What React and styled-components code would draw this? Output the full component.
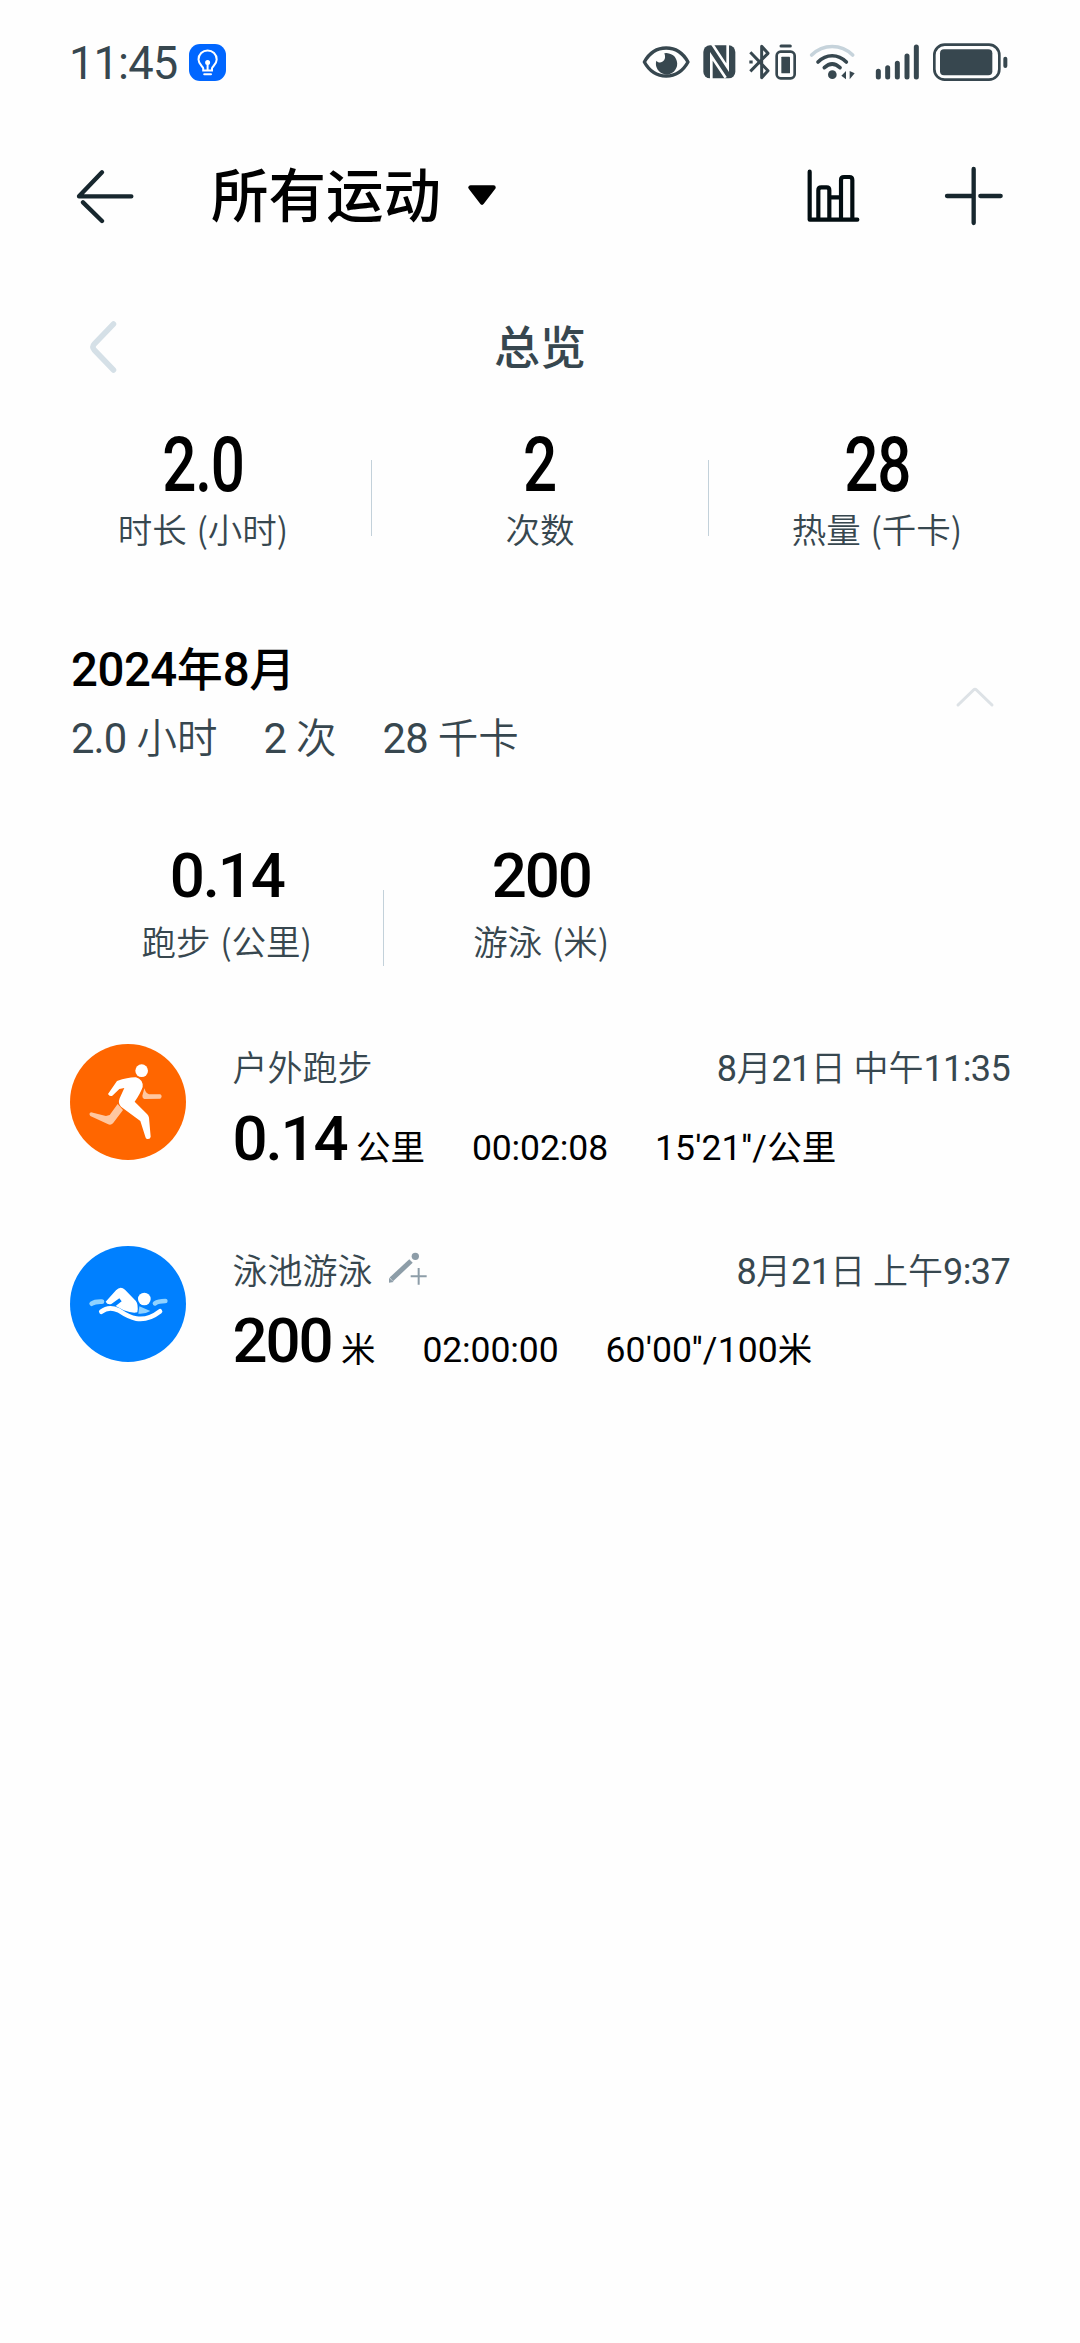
import React from 'react';
import styled, { createGlobalStyle } from 'styled-components';

const GlobalStyle = createGlobalStyle`
  body {
    margin: 0;
    background: #fefefe;
    font-family: "Noto Sans CJK SC", "Noto Sans", sans-serif;
    color: #000;
  }
  * { box-sizing: border-box; }
  svg { display: block; flex: none; }
`;

// Styled components
const Screen = styled.div`
  width: 1080px;
  min-height: 2343px;
  background: #fefefe;
  white-space: nowrap;
`;

const StatusBar = styled.div`
  height: 124px;
  padding: 0 70px 0 69px;
  display: flex;
  align-items: center;
  justify-content: space-between;
  color: #37474f;
`;

const StatusGroup = styled.div`
  display: flex;
  align-items: center;
  gap: ${({ gap }) => gap}px;
`;

const Clock = styled.div`
  font-size: 44px;
  line-height: 60px;
  padding-bottom: 4px;
`;

const Digits = styled.span`
  font-family: Roboto, "Noto Sans", sans-serif;
  font-size: 1.03em;
  font-weight: ${({ $weight }) => $weight};
  letter-spacing: ${({ $spacing }) => $spacing}em;
  line-height: 0;
`;

const Header = styled.header`
  height: 143px;
  padding: 0 76px 0 76px;
  display: flex;
  align-items: center;
`;

const Title = styled.h1`
  margin: 0 26px 0 75px;
  padding-bottom: 8px;
  font-size: 57.5px;
  line-height: 80px;
  font-weight: 500;
`;

const HeaderActions = styled.div`
  margin-left: auto;
  display: flex;
  align-items: center;
  gap: 84px;
`;

const Pager = styled.div`
  height: 140px;
  padding: 19px 88px 0;
  display: grid;
  grid-template-columns: 30px 1fr 30px;
  align-items: center;
`;

const PagerTitle = styled.div`
  text-align: center;
  font-size: 46px;
  line-height: 60px;
  padding-bottom: 5px;
  font-weight: 500;
  color: #37474f;
`;

const Stats = styled.div`
  display: grid;
  grid-template-columns: repeat(3, ${({ column }) => column}px);
  margin-left: ${({ left }) => left}px;
  padding-top: ${({ top }) => top}px;
`;

const Stat = styled.div`
  display: flex;
  flex-direction: column;
  align-items: center;
  position: relative;

  &:not(:last-child)::after {
    content: '';
    position: absolute;
    right: 0;
    bottom: ${({ lineBottom }) => lineBottom}px;
    width: 1px;
    height: 76px;
    background: #c3d1da;
  }
`;

const BigValue = styled.div`
  font-size: 73px;
  line-height: 80px;
  font-weight: 500;
  transform: scaleX(0.8);
`;

const Value = styled.div`
  font-size: 60px;
  line-height: ${({ height }) => height}px;
  font-weight: 500;
`;

const Label = styled.div`
  margin-top: ${({ gap }) => gap}px;
  font-size: 34.5px;
  line-height: 44px;
  font-weight: 350;
  word-spacing: 2px;
  color: #37474f;
`;

const Month = styled.section`
  padding: 86px 85px 0 71px;
  display: flex;
  align-items: center;
  justify-content: space-between;
`;

const MonthTitle = styled.h2`
  margin: 0 0 10px;
  font-size: 46px;
  line-height: 60px;
  font-weight: 500;
`;

const MonthSummary = styled.div`
  display: flex;
  gap: 46px;
  font-size: 40.5px;
  line-height: 60px;
  font-weight: 350;
  word-spacing: 1px;
  color: #37474f;
`;

const MonthToggle = styled.div`
  padding-bottom: 9px;
`;

const Records = styled.div`
  padding: 80px 70px 0 69.5px;
  display: grid;
  row-gap: 70.5px;
`;

const Record = styled.div`
  height: 132px;
  display: grid;
  grid-template-columns: 116px 1fr;
  column-gap: 47px;
`;

const Badge = styled.div`
  width: 116px;
  height: 116px;
  margin-top: 1.5px;
  border-radius: 50%;
  background: ${({ color }) => color};
`;

const RecordTop = styled.div`
  height: 48px;
  display: flex;
  align-items: center;
  font-size: 35px;
  line-height: 48px;
  font-weight: 350;
  color: #37474f;
`;

const RecordDate = styled.div`
  margin-left: auto;
`;

const RecordBottom = styled.div`
  display: flex;
  align-items: baseline;
  gap: 47px;
  height: 84px;
  padding-top: 3.5px;
  font-size: 34.5px;
  line-height: 80px;
`;

const Distance = styled.div`
  display: flex;
  align-items: baseline;
  gap: 9.5px;
`;

// Numbers are set in Roboto, everything else in the CJK face
const Txt = ({ children, weight = 400, spacing = 0 }) =>
  children.split(/([\d.:'"/]+)/).map((part, i) =>
    i % 2 ? <Digits key={i} $weight={weight} $spacing={spacing}>{part}</Digits> : part
  );

const BulbIcon = () => (
  <svg width="37" height="37" viewBox="0 0 37 37" fill="none" stroke="#fff" strokeWidth="2" strokeLinecap="round">
    <rect width="37" height="37" rx="11" fill="#0066ff" stroke="none" />
    <path d="M14.2 26.5v-2.2c0-1.6-4.7-3.8-4.7-8.8a9.1 9.1 0 0 1 18.2 0c0 5-4.7 7.2-4.7 8.8v2.2zM15.2 30.3h6.8M18.6 26v-6.5" />
    <circle cx="18.6" cy="18.5" r="1.5" fill="#fff" />
  </svg>
);

const EyeIcon = () => (
  <svg width="49" height="36" viewBox="36 41 147 108">
    <path d="M43 95C74 39 143 39 174 95C143 151 74 151 43 95Z" fill="none" stroke="#37474f" strokeWidth="10" strokeLinejoin="round" />
    <path d="M103 69a32 32 0 1 1-24 22c8 12 34 4 24-22z" fill="#37474f" />
  </svg>
);

const NfcIcon = () => (
  <svg width="34" height="36" viewBox="219 41 102 108">
    <rect x="220" y="45" width="96" height="99" rx="20" fill="#37474f" />
    <path d="M244 148V78L287 142M247 42L293 112V42" fill="none" stroke="#fefefe" strokeWidth="8" />
  </svg>
);

const BluetoothIcon = () => (
  <svg width="48" height="36" viewBox="357 41 144 108" fill="none" stroke="#37474f" strokeWidth="9" strokeLinejoin="round">
    <path d="M361 66L414 121L395 142V48L414 69L361 123" />
    <path d="M358 95h10" strokeWidth="9" />
    <rect x="440" y="64" width="54" height="80" rx="12" strokeWidth="8" />
    <rect x="454" y="79" width="26" height="50" rx="2" fill="#37474f" stroke="none" />
    <path d="M453 47h28" strokeLinecap="round" />
  </svg>
);

const WifiIcon = () => (
  <svg width="54" height="36" viewBox="537 41 162 108" fill="none" strokeLinecap="round" strokeWidth="11">
    <path d="M545 74C580 40 633 40 668 74" stroke="#c6d3db" />
    <path d="M564 95C589 70 624 70 649 95" stroke="#37474f" />
    <path d="M583 112C598 98 615 98 630 112" stroke="#37474f" />
    <circle cx="607" cy="133" r="13" fill="#37474f" />
    <path d="M634 136L648 122V147ZM659 122V147L674 129Z" fill="#37474f" />
  </svg>
);

const SignalIcon = () => (
  <svg width="45" height="36" viewBox="735 41 135 108" stroke="#37474f" strokeWidth="15" strokeLinecap="round">
    <path d="M745 123v17M773 112v28M802 99v41M831 77v63M859 50v90" />
  </svg>
);

const BatteryIcon = () => (
  <svg width="78" height="38" viewBox="906 38 234 114" fill="none" stroke="#37474f">
    <rect x="913" y="43" width="195" height="105" rx="31" strokeWidth="8" />
    <rect x="930" y="57" width="157" height="78" rx="12" fill="#37474f" stroke="none" />
    <path d="M1126 85v22" strokeWidth="12" strokeLinecap="round" />
  </svg>
);

const BackIcon = () => (
  <svg width="60" height="56" viewBox="48 51 180 168" fill="none" stroke="#17272e" strokeWidth="13" strokeLinecap="round">
    <path d="M214 136H57L126 64" strokeLinejoin="round" />
    <path d="M69 154L126 210" />
  </svg>
);

const DropdownIcon = () => (
  <svg width="30" height="24" viewBox="0 0 30 24">
    <path d="M3.5 3.5h23L15 18.5z" fill="#000" stroke="#000" strokeWidth="4.5" strokeLinejoin="round" />
  </svg>
);

const ChartIcon = () => (
  <svg width="53" height="54" viewBox="143 57 159 162" fill="none" stroke="#020d11" strokeWidth="12.5" strokeLinecap="round" strokeLinejoin="round">
    <path d="M151 65V209H294" />
    <path d="M177 207V121Q177 112 186 112H202Q210 112 210 121V207M210 142H245M245 207V90Q245 81 254 81H270Q279 81 279 90V207" />
  </svg>
);

const PlusIcon = () => (
  <svg width="60" height="60" viewBox="552 46 180 180" stroke="#17272e" strokeWidth="13" strokeLinecap="round">
    <path d="M641 55V217M561 136H638M661 136H722" />
  </svg>
);

const PrevIcon = () => (
  <svg width="30" height="54" viewBox="0 0 30 54" fill="none" stroke="#d5e0e7" strokeWidth="5.5" strokeLinecap="round" strokeLinejoin="round">
    <path d="M25.5 4L6.3 24Q3.5 27 6.3 30L25.5 50" />
  </svg>
);

const CollapseIcon = () => (
  <svg width="40" height="22" viewBox="0 0 40 22" fill="none" stroke="#dde2e6" strokeWidth="3" strokeLinecap="round" strokeLinejoin="round">
    <path d="M3 19L18.5 4Q20 2.5 21.5 4L37 19" />
  </svg>
);

const EditIcon = () => (
  <svg width="42" height="36" viewBox="985 65 126 108" stroke="#8d9da8" fill="none">
    <path d="M995 150L1054 95" strokeWidth="15" />
    <path d="M988 160V145L1002 158Z" fill="#8d9da8" stroke="none" />
    <circle cx="1067" cy="81" r="11" fill="#8d9da8" stroke="none" />
    <path d="M1053 141H1101M1077 116V166" strokeWidth="6" />
  </svg>
);

const RunIcon = () => (
  <svg width="116" height="116" viewBox="29 41 348 348" fill="#fff">
    <path d="M252 174Q257 190 266 192L300 192Q308 198 300 205L252 206Q246 205 246 196Z" fill="#ffc7a0" />
    <path d="M172 221L188 239L158 279Q151 286 142 281L90 257Q84 250 92 246L137 257L148 254Z" fill="#ffc7a0" />
    <circle cx="244" cy="121" r="19" />
    <path d="M170 152Q205 140 227 141Q249 148 247 170Q240 190 223 214L260 251Q265 256 266 262L271 319Q270 328 260 326Q256 325 255 319L240 272L182 229Q172 219 178 204L192 173L177 176L156 196Q147 199 143 191Z" />
  </svg>
);

const SwimIcon = () => (
  <svg width="116" height="116" viewBox="29 47 348 348" fill="#fff">
    <path d="M94 220Q104 213 125 214M284 219Q294 212 315 212" fill="none" stroke="#90d2ff" strokeWidth="14" strokeLinecap="round" />
    <path d="M237 228L270 242Q254 252 234 250Z" fill="#90d2ff" />
    <circle cx="252" cy="206" r="19" />
    <path d="M136 214L167 180Q180 165 194 178L226 211Q235 221 231 246Q217 250 190 240L166 227L184 213L177 204L153 221Q141 224 136 214Z" />
    <path d="M123 244Q145 226 175 240C205 260 245 285 299 243" fill="none" stroke="#fff" strokeWidth="14" strokeLinecap="round" />
  </svg>
);

const overview = [
  { value: '2.0', label: '时长 (小时)' },
  { value: '2', label: '次数' },
  { value: '28', label: '热量 (千卡)' },
];

const monthStats = [
  { value: '0.14', label: '跑步 (公里)' },
  { value: '200', label: '游泳 (米)' },
];

const records = [
  {
    icon: <RunIcon />,
    color: '#ff6600',
    name: '户外跑步',
    date: '8月21日 中午11:35',
    value: '0.14',
    unit: '公里',
    duration: '00:02:08',
    pace: `15'21''/公里`,
  },
  {
    icon: <SwimIcon />,
    color: '#0080ff',
    name: '泳池游泳',
    manual: true,
    date: '8月21日 上午9:37',
    value: '200',
    unit: '米',
    duration: '02:00:00',
    pace: `60'00''/100米`,
  },
];

const EditMark = styled.span`
  margin-left: 15px;
`;

const App = () => {
  return (
    <>
      <GlobalStyle />
      <Screen>
        <StatusBar>
          <StatusGroup gap={12}>
            <Clock><Txt spacing={-0.02}>11:45</Txt></Clock>
            <BulbIcon />
          </StatusGroup>
          <StatusGroup gap={12}>
            <EyeIcon />
            <NfcIcon />
            <BluetoothIcon />
            <WifiIcon />
            <SignalIcon />
            <BatteryIcon />
          </StatusGroup>
        </StatusBar>

        <Header>
          <BackIcon />
          <Title>所有运动</Title>
          <DropdownIcon />
          <HeaderActions>
            <ChartIcon />
            <PlusIcon />
          </HeaderActions>
        </Header>

        <Pager>
          <PrevIcon />
          <PagerTitle>总览</PagerTitle>
        </Pager>

        <Stats column={337} left={34.5} top={12}>
          {overview.map((item) => (
            <Stat key={item.label} lineBottom={14}>
              <BigValue><Txt weight={500} spacing={-0.02}>{item.value}</Txt></BigValue>
              <Label gap={7}>{item.label}</Label>
            </Stat>
          ))}
        </Stats>

        <Month>
          <div>
            <MonthTitle><Txt weight={500} spacing={-0.01}>2024年8月</Txt></MonthTitle>
            <MonthSummary>
              <span><Txt spacing={-0.02}>2.0 小时</Txt></span>
              <span><Txt spacing={-0.02}>2 次</Txt></span>
              <span><Txt spacing={-0.02}>28 千卡</Txt></span>
            </MonthSummary>
          </div>
          <MonthToggle><CollapseIcon /></MonthToggle>
        </Month>

        <Stats column={314.5} left={69.5} top={70}>
          {monthStats.map((item) => (
            <Stat key={item.label} lineBottom={-4}>
              <Value height={70}><Txt weight={500} spacing={-0.035}>{item.value}</Txt></Value>
              <Label gap={12}>{item.label}</Label>
            </Stat>
          ))}
        </Stats>

        <Records>
          {records.map((item) => (
            <Record key={item.name}>
              <Badge color={item.color}>{item.icon}</Badge>
              <div>
                <RecordTop>
                  <span>{item.name}</span>
                  {item.manual && <EditMark><EditIcon /></EditMark>}
                  <RecordDate><Txt spacing={-0.018}>{item.date}</Txt></RecordDate>
                </RecordTop>
                <RecordBottom>
                  <Distance>
                    <Value height={80}><Txt weight={500} spacing={-0.035}>{item.value}</Txt></Value>
                    <span>{item.unit}</span>
                  </Distance>
                  <span><Txt spacing={-0.003}>{item.duration}</Txt></span>
                  <span><Txt spacing={0.003}>{item.pace}</Txt></span>
                </RecordBottom>
              </div>
            </Record>
          ))}
        </Records>
      </Screen>
    </>
  );
};

export default App;
